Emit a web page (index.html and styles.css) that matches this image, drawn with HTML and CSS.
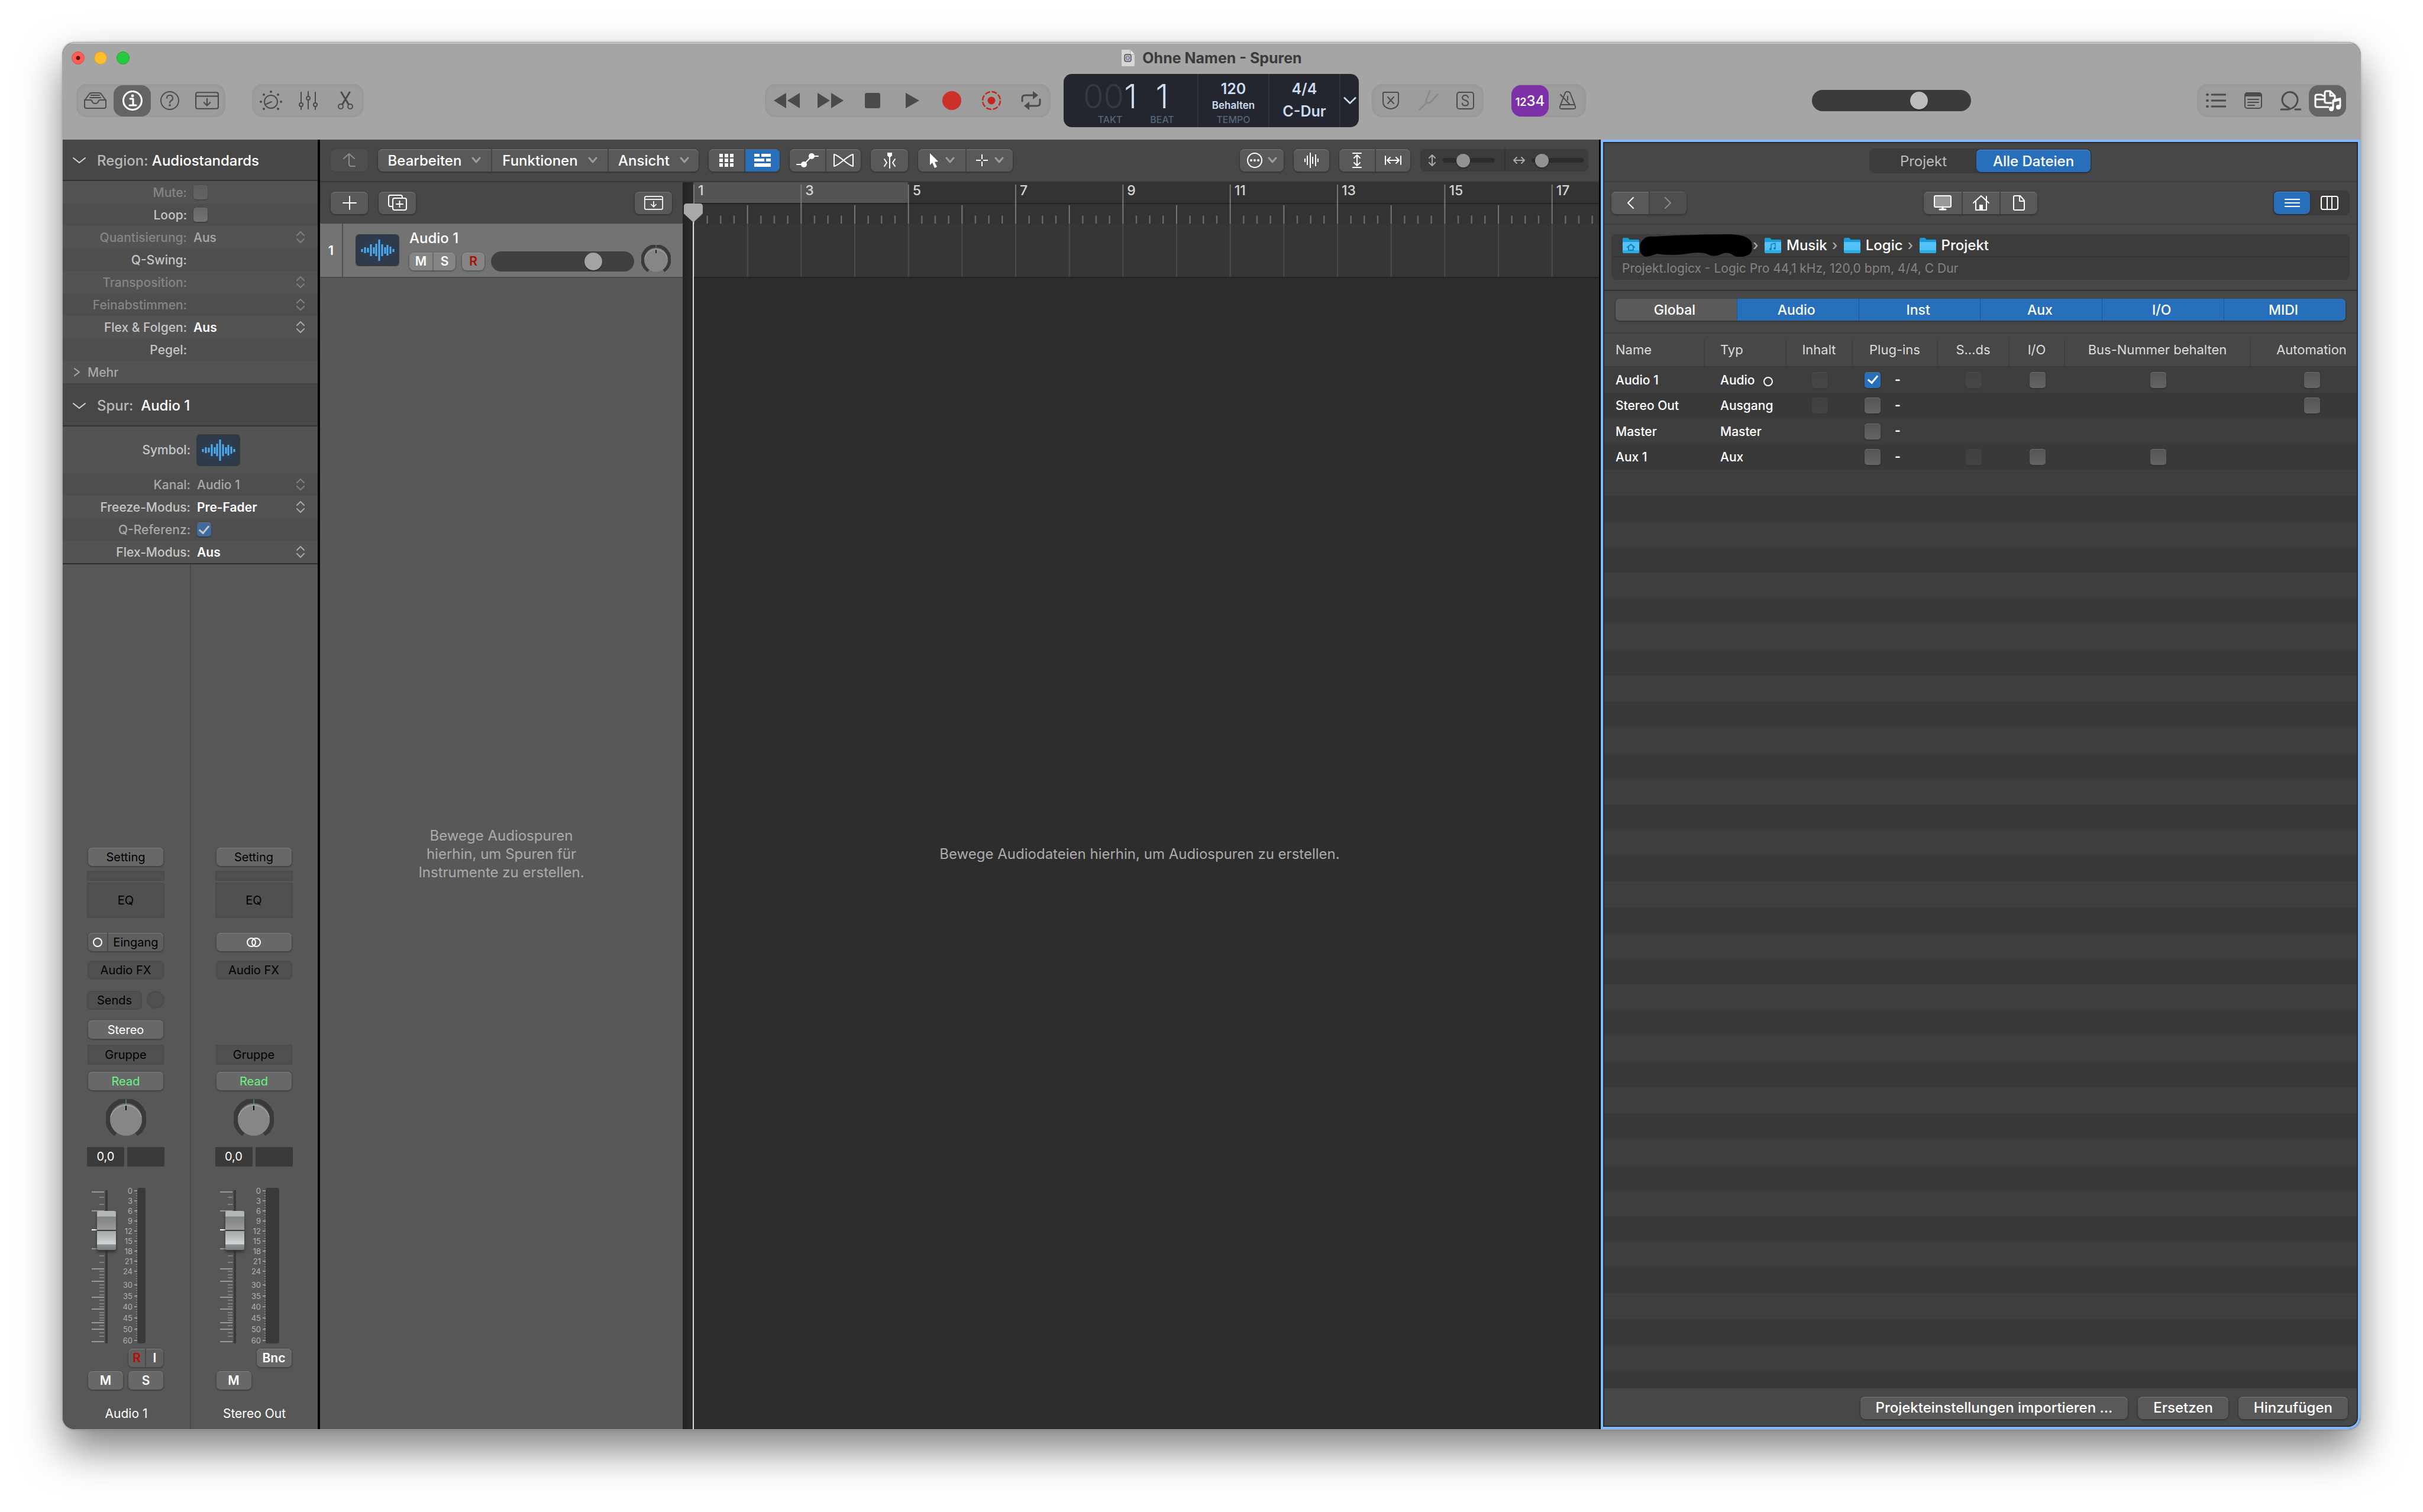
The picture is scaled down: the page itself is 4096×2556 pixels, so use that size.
FILE: index.html
```html
<!DOCTYPE html>
<html lang="de">
<head>
<meta charset="utf-8">
<title>Ohne Namen - Spuren</title>
<link rel="stylesheet" href="styles.css">
</head>
<body>
<svg class="defs" width="0" height="0" aria-hidden="true">
  <defs>
    <symbol id="i-updown" viewBox="0 0 16 24"><path d="M2 9 8 3l6 6M2 15l6 6 6-6" /></symbol>
    <symbol id="i-down" viewBox="0 0 24 14"><path d="M2 3l10 8 10-8" /></symbol>
    <symbol id="i-small" viewBox="0 0 16 12"><path d="M2 2l6 7 6-7" /></symbol>
    <symbol id="i-wave" viewBox="0 0 72 52"><path d="M10 24v5M15 21v10M20 22v8M25 16v20M30 21v11M34 15v21M39 8v36M44 16v20M49 21v11M53 17v18M58 20v12M63 24v5" /></symbol>
    <symbol id="i-circle" viewBox="0 0 18 18"><circle cx="9" cy="9" r="7" /></symbol>
    <symbol id="i-import" viewBox="0 0 38 30"><path d="M4 2h30q3 0 3 3v20q0 3-3 3H4q-3 0-3-3V5q0-3 3-3zM1 8h36M19 12v11M14 18l5 5 5-5" /></symbol>
    <symbol id="i-folder" viewBox="0 0 28 28"><path d="M0 3q0-2 2-2h7l3 3h14q2 0 2 2v18q0 3-3 3H3q-3 0-3-3z" fill="#1a9bd7" stroke="none" /><path d="M0 8h28v16q0 3-3 3H3q-3 0-3-3z" fill="#4fc3f7" stroke="none" /><path d="M0 22h28v2q0 3-3 3H3q-3 0-3-3z" fill="#2fabe4" stroke="none" /></symbol>
    <symbol id="i-knob" viewBox="0 0 68 68"><path d="M16.700 60.200A31 31 0 1 1 51.300 60.200" stroke="#3a3a3a" stroke-width="8" stroke-linecap="butt" transform="translate(0 -1)" /><path d="M34 1v8" stroke="#3fc45c" stroke-width="1" /><circle cx="34" cy="35" r="27" fill="#868686" stroke="none" /><path d="M8 30a27 27 0 0 1 52 0" stroke="#b5b5b5" stroke-width="1" /><path d="M34 12v6" stroke="#000" stroke-width="2" /></symbol>
    <symbol id="i-scale" viewBox="0 0 86 264"><path d="M8 7h21M8 39h21M8 103h21M8 137h21M8 158h21M8 185h21M8 205h21M8 228h21M8 239h21M8 260h21" stroke="#9a9a9a" stroke-width="2" /><path d="M8 71h21" stroke="#fff" stroke-width="2" /><path d="M21 16h8M21 28h8M21 115h8M21 126h8M21 141h8M21 147h8M21 152h8M21 164h8M21 169h8M21 175h8M21 181h8M21 190h8M21 196h8M21 201h8M21 211h8M21 215h8M21 220h8M21 224h8M21 233h8M21 245h8M21 251h8" stroke="#808080" stroke-width="2" /><path d="M80 5h5M80 22h5M80 39h5M80 56h5M80 73h5M80 90h5M80 107h5M80 124h5M80 141h5M80 164h5M80 183h5M80 201h5M80 220h5M80 239h5M80 258h5" stroke="#9a9a9a" stroke-width="2" /><path d="M84 5v254" stroke="#9a9a9a" stroke-width="2" stroke-dasharray="1 3" /><g fill="#b2b2b2" stroke="none" font-size="13" text-anchor="end"><text x="77" y="10">0</text><text x="77" y="27">3</text><text x="77" y="44">6</text><text x="77" y="61">9</text><text x="77" y="78">12</text><text x="77" y="95">15</text><text x="77" y="112">18</text><text x="77" y="129">21</text><text x="77" y="146">24</text><text x="77" y="169">30</text><text x="77" y="188">35</text><text x="77" y="206">40</text><text x="77" y="225">45</text><text x="77" y="244">50</text><text x="77" y="263">60</text></g></symbol>
  </defs>
</svg>

<div class="window">
  <header class="chrome">
    <div class="titlebar">
      <div class="lights"><button class="light close" aria-label="Schließen"></button><button class="light mini" aria-label="Minimieren"></button><button class="light zoom" aria-label="Zoomen"></button></div>
      <h1 class="title"><svg width="24" height="30" viewBox="0 0 24 30"><path d="M2 1h14l7 8v18q0 2-2 2H2q-1 0-1-1V2q0-1 1-1z" fill="#d6d6d6" stroke="none"/><path d="M16 1v8h7z" fill="#ececec" stroke="#aaa" stroke-width="1"/><rect x="6" y="9" width="11" height="12" rx="3" fill="#aebac6" stroke="#555" stroke-width="1.500"/><circle cx="11.500" cy="15" r="3" stroke="#667" stroke-width="1"/></svg>Ohne Namen - Spuren</h1>
    </div>
    <div class="toolbar">
      <div class="bar-side">
        <div class="pill">
          <button aria-label="Bibliothek"><svg width="40" height="32" viewBox="0 0 40 32"><path d="M2 16 9 6q2-3 5-3h12q3 0 5 3l7 10v10q0 3-3 3H5q-3 0-3-3zM2 15h10q2 0 3 3 1 3 5 3t5-3q1-3 3-3h10M13 7h14M11 11h18"/></svg></button>
          <button class="on" aria-label="Informationen"><svg width="36" height="36" viewBox="0 0 36 36"><circle cx="18" cy="18" r="15.500" stroke-width="3"/><path d="M14 15h5v11M13 26h11" stroke-width="3"/><circle cx="18" cy="10" r="2.400" fill="currentColor" stroke="none"/></svg></button>
          <button aria-label="Kurzhilfe"><svg width="36" height="36" viewBox="0 0 36 36"><circle cx="18" cy="18" r="15"/><path d="M13 14q0-5 5-5t5 5q0 3-3 4.500-2 1-2 3.500"/><circle cx="18" cy="26" r="1.800" fill="currentColor" stroke="none"/></svg></button>
          <button aria-label="Werkzeugleiste"><svg width="40" height="32"><use href="#i-import"/></svg></button>
        </div>
        <div class="pill gap-l">
          <button aria-label="Smart Controls"><svg width="40" height="36" viewBox="0 0 40 36"><circle cx="20" cy="20" r="11"/><path d="M12 24l9-4"/><g fill="currentColor" stroke="none"><circle cx="20" cy="3" r="2"/><circle cx="8" cy="8" r="2"/><circle cx="32" cy="8" r="2"/><circle cx="3" cy="20" r="2"/><circle cx="37" cy="20" r="2"/><circle cx="8" cy="32" r="2"/><circle cx="32" cy="32" r="2"/></g></svg></button>
          <button aria-label="Mixer"><svg width="32" height="34" viewBox="0 0 32 34"><path d="M4 3v18M4 28v4M16 2v8M16 17v14M28 3v18M28 28v4"/><circle cx="4" cy="24" r="3"/><circle cx="16" cy="13" r="3"/><circle cx="28" cy="24" r="3"/></svg></button>
          <button aria-label="Editoren"><svg width="28" height="34" viewBox="0 0 28 34"><path d="M7 3l12 20M21 3 9 23" stroke-width="3"/><circle cx="6" cy="27" r="4"/><circle cx="22" cy="27" r="4"/></svg></button>
        </div>
        <div class="pill push transport">
          <button aria-label="Zurückspulen"><svg width="46" height="28" viewBox="0 0 46 28"><path class="f" d="M22 1v26L1 14zM45 1v26L24 14z"/></svg></button>
          <button aria-label="Vorspulen"><svg width="46" height="28" viewBox="0 0 46 28"><path class="f" d="M1 1v26l21-13zM24 1v26l21-13z"/></svg></button>
          <button aria-label="Stopp"><svg width="28" height="28" viewBox="0 0 28 28"><rect class="f" x="1" y="1" width="26" height="26" rx="3"/></svg></button>
          <button aria-label="Wiedergabe"><svg width="28" height="28" viewBox="0 0 28 28"><path class="f" d="M3 1v26l23-13z"/></svg></button>
          <button aria-label="Aufnahme"><svg width="34" height="34" viewBox="0 0 34 34"><circle cx="17" cy="17" r="16" fill="#cc3129" stroke="none"/></svg></button>
          <button aria-label="Aufnahme erfassen"><svg width="34" height="34" viewBox="0 0 34 34"><circle cx="17" cy="17" r="15" stroke="#c9211b" stroke-width="2.500" stroke-linecap="butt" stroke-dasharray="9 2.780"/><circle cx="17" cy="17" r="6.500" fill="#c9211b" stroke="none"/></svg></button>
          <button aria-label="Cycle"><svg width="36" height="32" viewBox="0 0 36 32"><path d="M3 17v-5q0-5 5-5h14M33 14v6q0 5-5 5H14" stroke-width="3"/><path class="f" d="M21 0l9 7-9 7zM15 18l-9 7 9 7z"/></svg></button>
        </div>
      </div>
      <div class="lcd">
        <div class="lcd-pos">
          <div class="digits"><span><i>00</i>1</span><small>TAKT</small></div>
          <div class="digits"><span>1</span><small>BEAT</small></div>
        </div>
        <div class="lcd-cell"><b>120</b><strong>Behalten</strong><small>TEMPO</small></div>
        <div class="lcd-cell wide"><b>4/4</b><b>C-Dur</b></div>
        <button class="lcd-more" aria-label="Anzeigemodus"><svg width="22" height="16" viewBox="0 0 24 14"><path d="M2 2l10 10L22 2" stroke-width="3"/></svg></button>
      </div>
      <div class="bar-side">
        <div class="pill">
          <button aria-label="Ersetzen"><svg width="30" height="32" viewBox="0 0 30 32"><path d="M4 2h22q2 0 2 2v14q0 7-6 10-4 2-7 2t-7-2q-6-3-6-10V4q0-2 2-2zM10 10l10 11M20 10 10 21"/></svg></button>
          <button class="dim" aria-label="Stimmgerät"><svg width="36" height="36" viewBox="0 0 36 36"><path d="M21 2 15 17q-1 4 2 5t6-2L34 8M16 21 4 33" stroke-width="3"/></svg></button>
          <button aria-label="Solo"><svg width="32" height="32" viewBox="0 0 32 32"><rect x="2" y="2" width="28" height="28" rx="4"/><path d="M21 11q-1-4-5-4t-5 4q0 3 5 4.500t5 5q0 4-5 4t-5-4"/></svg></button>
        </div>
        <div class="pill gap-m">
          <button class="count" aria-pressed="true"><span>1</span><span>2</span><b>3</b><b>4</b></button>
          <button aria-label="Metronom"><svg width="34" height="34" viewBox="0 0 34 34"><path d="M12 6q1-4 5-4t5 4l8 21q1 4-3 4H7q-4 0-3-4zM5 24h24M5 7l16 17M17 10v6"/></svg></button>
        </div>
        <input class="range master" type="range" value="70" aria-label="Hauptlautstärke">
        <div class="pill push">
          <button aria-label="Listeneditoren"><svg width="34" height="28" viewBox="0 0 34 28"><path d="M10 4h23M10 14h23M10 24h23" stroke-width="3"/><path d="M2 4h1M2 14h1M2 24h1" stroke-width="4"/></svg></button>
          <button aria-label="Notizblock"><svg width="32" height="30" viewBox="0 0 32 30"><rect x="2" y="2" width="28" height="26" rx="4"/><path class="f" d="M2 8V5q0-3 3-3h22q3 0 3 3v3z"/><path d="M7 13h18M7 18h18M7 23h11"/></svg></button>
          <button aria-label="Loop-Browser"><svg width="36" height="34" viewBox="0 0 36 34"><path d="M2 32h12q15-3 16-16A13 13 0 1 0 13 28q2 1 3 2M26 32h9" stroke-width="3"/></svg></button>
          <button class="on" aria-label="Browser"><svg width="48" height="38" viewBox="0 0 48 38"><path d="M19 11h-3l-3-2H6q-3 0-3 3v15q0 3 3 3h19M3 17h14M19 22V6q0-3 3-3h6l8 8v6M28 3v8h7M19 20q0 3 3 3h8" stroke-width="3"/><path d="M33 32V19l12-2v12" stroke-width="3"/><path class="f" d="M33 17l13-3v5l-13 3z"/><circle class="f" cx="30" cy="33" r="4"/><circle class="f" cx="42" cy="30" r="4"/></svg></button>
        </div>
      </div>
    </div>
  </header>

  <main class="body">
    <aside class="inspector">
      <h2 class="sec"><svg width="24" height="14"><use href="#i-down"/></svg><span>Region: <b>Audiostandards</b></span></h2>
      <div class="rows">
        <div class="row off"><label for="mute">Mute:</label><input id="mute" type="checkbox" disabled></div>
        <div class="row"><label for="loop">Loop:</label><input id="loop" type="checkbox"></div>
        <div class="row off"><label for="quant">Quantisierung:</label><select id="quant"><option>Aus</option></select><svg width="16" height="24"><use href="#i-updown"/></svg></div>
        <div class="row"><label>Q-Swing:</label></div>
        <div class="row off"><label for="trans">Transposition:</label><select id="trans"><option></option></select><svg width="16" height="24"><use href="#i-updown"/></svg></div>
        <div class="row off"><label for="fein">Feinabstimmen:</label><select id="fein"><option></option></select><svg width="16" height="24"><use href="#i-updown"/></svg></div>
        <div class="row"><label for="flex">Flex &amp; Folgen:</label><select id="flex"><option>Aus</option></select><svg width="16" height="24"><use href="#i-updown"/></svg></div>
        <div class="row"><label>Pegel:</label></div>
        <div class="row more"><svg width="14" height="16" viewBox="0 0 14 16"><path d="M3 2l8 6-8 6"/></svg><span>Mehr</span></div>
      </div>
      <h2 class="sec second"><svg width="24" height="14"><use href="#i-down"/></svg><span>Spur: &nbsp;<b>Audio 1</b></span></h2>
      <div class="rows track-rows">
        <div class="row tall"><label>Symbol:</label><div class="wave"><svg width="72" height="52"><use href="#i-wave"/></svg></div></div>
        <div class="row half"><label for="kanal">Kanal:</label><select id="kanal"><option>Audio 1</option></select><svg width="16" height="24"><use href="#i-updown"/></svg></div>
        <div class="row"><label for="freeze">Freeze-Modus:</label><select id="freeze"><option>Pre-Fader</option></select><svg width="16" height="24"><use href="#i-updown"/></svg></div>
        <div class="row half"><label for="qref">Q-Referenz:</label><input class="muted" id="qref" type="checkbox" checked></div>
        <div class="row"><label for="fmod">Flex-Modus:</label><select id="fmod"><option>Aus</option></select><svg width="16" height="24"><use href="#i-updown"/></svg></div>
      </div>
      <div class="mixer">
        <section class="strip">
          <button class="key">Setting</button>
          <div class="slot slim"></div>
          <div class="slot eq">EQ</div>
          <div class="key split"><button class="lit" aria-label="Mono"><svg width="18" height="18"><use href="#i-circle"/></svg></button><button>Eingang</button></div>
          <button class="slot fx">Audio FX</button>
          <div class="sends"><button class="slot fx">Sends</button><span class="slot dot"></span></div>
          <button class="key lit">Stereo</button>
          <button class="slot group">Gruppe</button>
          <button class="key read">Read</button>
          <svg class="knob" width="68" height="68"><use href="#i-knob"/></svg>
          <div class="values"><output>0,0</output><output></output></div>
          <div class="fader"><svg width="86" height="264"><use href="#i-scale"/></svg><input type="range" value="82" aria-label="Lautstärke Audio 1"><span class="meter"></span></div>
          <div class="pair end"><div class="key split ri"><button class="rec">R</button><button>I</button></div></div>
          <div class="pair"><button class="key lit">M</button><button class="key lit">S</button></div>
          <span></span>
          <h3>Audio 1</h3>
        </section>
        <section class="strip">
          <button class="key">Setting</button>
          <div class="slot slim"></div>
          <div class="slot eq">EQ</div>
          <button class="key lit" aria-label="Stereo-Format"><svg width="26" height="18" viewBox="0 0 26 18"><circle cx="9" cy="9" r="7"/><circle cx="17" cy="9" r="7"/></svg></button>
          <button class="slot fx">Audio FX</button>
          <span></span>
          <span></span>
          <button class="slot group">Gruppe</button>
          <button class="key read">Read</button>
          <svg class="knob" width="68" height="68"><use href="#i-knob"/></svg>
          <div class="values"><output>0,0</output><output></output></div>
          <div class="fader"><svg width="86" height="264"><use href="#i-scale"/></svg><input type="range" value="82" aria-label="Lautstärke Stereo Out"><span class="meter stereo"></span></div>
          <div class="pair end"><button class="key lit">Bnc</button></div>
          <div class="pair"><button class="key lit">M</button></div>
          <span></span>
          <h3>Stereo Out</h3>
        </section>
      </div>
    </aside>

    <section class="arrange">
      <div class="menubar">
        <button class="btn w62 faint" aria-label="Hierarchie"><svg width="26" height="26" viewBox="0 0 26 26"><path d="M3 10l9-8 9 8M12 3v16q0 4 4 4h6"/></svg></button>
        <div class="seg menus"><button>Bearbeiten<svg width="16" height="12"><use href="#i-small"/></svg></button><button>Funktionen<svg width="16" height="12"><use href="#i-small"/></svg></button><button>Ansicht<svg width="16" height="12"><use href="#i-small"/></svg></button></div>
        <div class="seg w60"><button aria-label="Raster"><svg width="26" height="24" viewBox="0 0 26 24"><path class="f" d="M1 1h6v6H1zM10 1h6v6h-6zM19 1h6v6h-6zM1 9h6v6H1zM10 9h6v6h-6zM19 9h6v6h-6zM1 17h6v6H1zM10 17h6v6h-6zM19 17h6v6h-6z"/></svg></button><button class="blue" aria-label="Spuransicht"><svg width="28" height="22" viewBox="0 0 28 22"><path class="f" d="M0 0h9v5H0zM12 0h16v5H12zM0 8h17v5H0zM20 8h8v5h-8zM0 16h28v6H0z"/></svg></button></div>
        <div class="seg w60"><button aria-label="Automation"><svg width="38" height="26" viewBox="0 0 38 26"><path d="M1 20h12L26 6h11"/><circle class="f" cx="13" cy="20" r="5"/><circle class="f" cx="26" cy="6" r="5"/></svg></button><button aria-label="Flex"><svg width="36" height="24" viewBox="0 0 36 24"><path d="M2 2v20q5-1 16-10T34 2v20q-5-1-16-10T2 2z"/></svg></button></div>
        <button class="btn w62" aria-label="Catch"><svg width="26" height="28" viewBox="0 0 26 28"><path class="f" d="M9 1h8v5l-3 3h-2L9 6z"/><path d="M13 6v21M4 12l4 6-4 6M22 12l-4 6 4 6"/></svg></button>
        <div class="seg w80"><button aria-label="Zeiger"><svg width="18" height="26" viewBox="0 0 18 26"><path class="f" d="M2 1l14 14-6 1 4 8-4 2-4-9-4 4z"/></svg><svg width="16" height="12"><use href="#i-small"/></svg></button><button aria-label="Fadenkreuz"><svg width="22" height="22" viewBox="0 0 22 22"><path d="M11 1v8M11 13v8M1 11h8M13 11h8" stroke-linecap="butt"/></svg><svg width="16" height="12"><use href="#i-small"/></svg></button></div>
        <button class="btn w74 push" aria-label="Einrasten"><svg width="28" height="28" viewBox="0 0 28 28"><circle cx="14" cy="14" r="12"/><circle class="f" cx="8" cy="14" r="2"/><circle class="f" cx="14" cy="14" r="2"/><circle class="f" cx="20" cy="14" r="2"/></svg><svg width="16" height="12"><use href="#i-small"/></svg></button>
        <button class="btn w60" aria-label="Wellenform"><svg width="26" height="28" viewBox="0 0 26 28"><path d="M2 11v6M6 6v16M11 1v26M15 8v12M20 4v20M24 11v6" stroke-linecap="butt"/></svg></button>
        <div class="seg w60"><button aria-label="Vertikal zoomen"><svg width="20" height="26" viewBox="0 0 20 26"><path d="M3 1h14M3 25h14M10 4v18M5 9l5-5 5 5M5 17l5 5 5-5"/></svg></button><button aria-label="Horizontal zoomen"><svg width="28" height="18" viewBox="0 0 28 18"><path d="M1 2v14M27 2v14M4 9h20M9 4L4 9l5 5M19 4l5 5-5 5"/></svg></button></div>
        <div class="zooms"><label><svg width="16" height="22" viewBox="0 0 16 22"><path d="M8 2v18M3 7l5-5 5 5M3 15l5 5 5-5"/></svg><input class="range thin" type="range" value="36" aria-label="Vertikaler Zoom"></label><label><svg width="22" height="16" viewBox="0 0 22 16"><path d="M2 8h18M7 3L2 8l5 5M15 3l5 5-5 5"/></svg><input class="range thin" type="range" value="9" aria-label="Horizontaler Zoom"></label></div>
      </div>
      <div class="workspace">
        <div class="headers">
          <div class="head-tools"><button class="btn w62" aria-label="Spur hinzufügen"><svg width="24" height="24" viewBox="0 0 24 24"><path d="M12 1v22M1 12h22"/></svg></button><button class="btn w62" aria-label="Spur duplizieren"><svg width="32" height="28" viewBox="0 0 32 28"><path d="M7 20H4q-3 0-3-3V4q0-3 3-3h17q3 0 3 3v2M11 6h17q3 0 3 3v14q0 3-3 3H11q-3 0-3-3V9q0-3 3-3zM19.500 11v10M14 16h11"/></svg></button><button class="btn w62 push" aria-label="Import"><svg width="32" height="26"><use href="#i-import"/></svg></button></div>
          <div class="track">
            <span class="num">1</span>
            <div class="wave"><svg width="72" height="52"><use href="#i-wave"/></svg></div>
            <div class="track-main">
              <h3>Audio 1</h3>
              <div class="track-ctl"><div class="seg ms"><button>M</button><button>S</button></div><button class="btn r">R</button><input class="range vol" type="range" value="75" aria-label="Lautstärke"></div>
            </div>
            <svg class="pan" width="50" height="50"><use href="#i-knob"/></svg>
          </div>
          <p class="hint">Bewege Audiospuren<br>hierhin, um Spuren für<br>Instrumente zu erstellen.</p>
        </div>
        <div class="timeline">
          <div class="ruler">
            <svg class="ticks" viewBox="0 0 1621 72" preserveAspectRatio="none"><defs><pattern id="beats" width="96" height="72" patternUnits="userSpaceOnUse"><path d="M25 58v14M49 58v14M73 58v14" stroke="#777" stroke-width="2"/></pattern><pattern id="bars" width="192" height="72" patternUnits="userSpaceOnUse"><path d="M1 4v68M97 40v32" stroke="#7c7c7c" stroke-width="2"/></pattern></defs><path d="M0 0h384v36H0z" fill="#545454" stroke="none"/><path d="M0 37h1621" stroke="#222" stroke-width="2"/><path d="M0 0h1621v72H0z" fill="url(#beats)" stroke="none"/><path d="M0 0h1621v72H0z" fill="url(#bars)" stroke="none"/></svg>
            <ol class="numbers"><li>1</li><li>3</li><li>5</li><li>7</li><li>9</li><li>11</li><li>13</li><li>15</li><li>17</li></ol>
          </div>
          <svg class="lane" viewBox="0 0 1621 96" preserveAspectRatio="none"><defs><pattern id="grid" width="96" height="96" patternUnits="userSpaceOnUse"><path d="M1 0v96" stroke="#4c4c4c" stroke-width="2"/></pattern></defs><path d="M0 0h1621v96H0z" fill="url(#grid)" stroke="none"/></svg>
          <p class="hint drop">Bewege Audiodateien hierhin, um Audiospuren zu erstellen.</p>
          <div class="playhead"><svg width="32" height="32" viewBox="0 0 32 32"><path d="M0 5q0-5 5-5h22q5 0 5 5v12L16 32 0 17z" fill="#a9a9a9" stroke="none"/></svg></div>
        </div>
      </div>
    </section>

    <section class="browser">
      <div class="tabs-row"><div class="toggle"><button>Projekt</button><button class="blue">Alle Dateien</button></div></div>
      <div class="nav-row">
        <div class="seg nav"><button aria-label="Zurück"><svg width="14" height="24" viewBox="0 0 14 24"><path d="M12 3l-9 9 9 9"/></svg></button><button class="faint" aria-label="Vor"><svg width="14" height="24" viewBox="0 0 14 24"><path d="M2 3l9 9-9 9"/></svg></button></div>
        <div class="seg places"><button aria-label="Computer"><svg width="30" height="26" viewBox="0 0 30 26"><rect x="1" y="1" width="28" height="19" rx="2" fill="#999"/><path d="M15 20v4M10 24h10" stroke-width="3"/></svg></button><button aria-label="Benutzerordner"><svg width="30" height="28" viewBox="0 0 30 28"><path d="M2 14L15 2l13 12M6 12v14h18V12M24 9V3"/><path class="f" d="M12 17h6v9h-6z"/></svg></button><button aria-label="Projektordner"><svg width="22" height="28" viewBox="0 0 22 28"><path d="M4 2h9l7 8v14q0 2-2 2H4q-2 0-2-2V4q0-2 2-2zM12 2v9h8"/></svg></button></div>
        <div class="toggle views"><button class="blue" aria-label="Liste"><svg width="26" height="18" viewBox="0 0 26 18"><path d="M0 3h26M0 9h26M0 15h26"/></svg></button><button aria-label="Spalten"><svg width="30" height="24" viewBox="0 0 30 24"><rect x="1" y="1" width="28" height="22" rx="3"/><path d="M11 1v22M19 1v22"/></svg></button></div>
      </div>
      <div class="path-row">
        <div class="path">
          <nav><svg width="28" height="28"><use href="#i-folder"/><path d="M8 17l6-5 6 5M10 16v6h8v-6" stroke="#1780b8" stroke-width="2"/></svg><svg class="blob" width="192" height="38" viewBox="0 0 192 38"><path d="M8 8Q12 3 24 4L60 2q60-2 90-2 34 0 40 14 4 18-8 22-14 5-22 0-10-7-20-3-14 7-26 0-12-4-34 0-24 4-50 0-10 4-18 5Q2 36 1 26 0 14 8 8z" fill="#000" stroke="none"/></svg><i>›</i><svg width="28" height="28"><use href="#i-folder"/><path d="M11 19v-7l7-2v8" stroke="#1780b8" stroke-width="1.500"/><circle cx="10" cy="20" r="2" fill="#1780b8" stroke="none"/><circle cx="17" cy="19" r="2" fill="#1780b8" stroke="none"/></svg><a href="#">Musik</a><i>›</i><svg width="28" height="28"><use href="#i-folder"/></svg><a href="#">Logic</a><i>›</i><svg width="28" height="28"><use href="#i-folder"/></svg><a href="#">Projekt</a></nav>
          <p>Projekt.logicx - Logic Pro 44,1 kHz, 120,0 bpm, 4/4, C Dur</p>
        </div>
      </div>
      <div class="filter-row"><div class="filters"><button>Global</button><button class="blue">Audio</button><button class="blue">Inst</button><button class="blue">Aux</button><button class="blue">I/O</button><button class="blue">MIDI</button></div></div>
      <div class="list">
        <table>
          <colgroup><col class="c1"><col class="c2"><col class="c3"><col class="c4"><col class="c5"><col class="c6"><col class="c7"><col></colgroup>
          <thead><tr><th>Name</th><th>Typ</th><th>Inhalt</th><th>Plug-ins</th><th>S...ds</th><th>I/O</th><th>Bus-Nummer behalten</th><th>Automation</th></tr></thead>
          <tbody>
            <tr><td>Audio 1</td><td>Audio <svg width="18" height="18"><use href="#i-circle"/></svg></td><td><input type="checkbox" disabled aria-label="Inhalt"></td><td><input type="checkbox" checked aria-label="Plug-ins"><b>-</b></td><td><input type="checkbox" disabled aria-label="Sends"></td><td><input type="checkbox" aria-label="I/O"></td><td><input type="checkbox" aria-label="Bus-Nummer"></td><td><input type="checkbox" aria-label="Automation"></td></tr>
            <tr><td>Stereo Out</td><td>Ausgang</td><td><input type="checkbox" disabled aria-label="Inhalt"></td><td><input type="checkbox" aria-label="Plug-ins"><b>-</b></td><td></td><td></td><td></td><td><input type="checkbox" aria-label="Automation"></td></tr>
            <tr><td>Master</td><td>Master</td><td></td><td><input type="checkbox" aria-label="Plug-ins"><b>-</b></td><td></td><td></td><td></td><td></td></tr>
            <tr><td>Aux 1</td><td>Aux</td><td></td><td><input type="checkbox" aria-label="Plug-ins"><b>-</b></td><td><input type="checkbox" disabled aria-label="Sends"></td><td><input type="checkbox" aria-label="I/O"></td><td><input type="checkbox" aria-label="Bus-Nummer"></td><td></td></tr>
          </tbody>
        </table>
      </div>
      <footer><button class="btn">Projekteinstellungen importieren ...</button><button class="btn">Ersetzen</button><button class="btn">Hinzufügen</button></footer>
    </section>
  </main>
</div>
</body>
</html>
```
FILE: styles.css
```css
* { box-sizing: border-box; }
body {
  margin: 0;
  min-height: 100vh;
  padding: 72px 106px 140px;
  display: flex;
  background: #fff;
  font-family: "Inter", "Liberation Sans", sans-serif;
  font-size: 21px;
  color: #fff;
}
h1, h2, h3, p, ol { margin: 0; padding: 0; font-weight: 500; }
button, select, input { font: inherit; color: inherit; margin: 0; padding: 0; border: 0; background: none; }
button { display: flex; align-items: center; justify-content: center; white-space: nowrap; }
svg { flex: none; display: block; fill: none; stroke: currentColor; stroke-width: 2; stroke-linecap: round; stroke-linejoin: round; }
.f { fill: currentColor; stroke: none; }
.defs { position: absolute; }
.push { margin-left: auto; }
.blue { background: #276fbb !important; color: #fff; }

.window {
  flex: 1;
  min-width: 0;
  display: flex;
  flex-direction: column;
  border-radius: 20px;
  overflow: hidden;
  background: #474747;
  box-shadow: 0 0 0 1px #a8a8a8, 0 0 4px rgba(0, 0, 0, .3), 0 34px 70px rgba(0, 0, 0, .5);
}

/* title bar and control bar */
.chrome { background: #a5a5a5; color: #4b4b4b; border-top: 2px solid #c6c6c6; height: 164px; }
.titlebar { display: grid; grid-template-columns: 1fr auto 1fr; align-items: center; height: 48px; margin-bottom: 3px; }
.lights { display: flex; gap: 16px; padding-left: 15px; }
.light { width: 22px; height: 22px; border-radius: 50%; }
.close { background: radial-gradient(circle, #6a0b06 0 3px, #fe5f57 4px); border: 1px solid #e0443e; }
.mini { background: #febc2e; border: 1px solid #dea123; }
.zoom { background: #28c840; border: 1px solid #1aab29; }
.title { display: flex; align-items: center; gap: 12px; font-size: 25px; font-weight: 700; color: #3b3b3b; }
.toolbar { display: grid; grid-template-columns: minmax(0, 1fr) auto minmax(0, 1fr); gap: 22px; padding: 0 24px 0 23px; height: 90px; }
.bar-side { display: flex; align-items: center; }
.pill { display: flex; height: 56px; border-radius: 18px; background: #9d9d9d; box-shadow: inset 0 0 6px rgba(0, 0, 0, .07); align-items: center; }
.pill button { width: 63px; height: 53px; border-radius: 16px; }
.pill .on { background: #646464; color: #fff; }
.pill .dim { color: #8a8a8a; }
.transport button { width: 67px; }
.transport button:nth-child(-n+2) { width: 74px; }
.gap-l { margin-left: 45px; }
.gap-m { margin-left: 47px; }
.pill .count { background: #7d31a6; color: #fff; align-items: baseline; padding-top: 12px; font-weight: 600; font-size: 18px; }
.count b { font-size: 24px; font-weight: 500; }
.lcd { display: flex; width: 499px; height: 90px; border-radius: 14px; background: #23262e; color: #cbdcf1; }
.lcd small { font-size: 16px; color: #54657a; font-weight: 500; }
.lcd-pos { display: flex; width: 226px; padding-left: 33px; gap: 22px; }
.digits { display: flex; flex-direction: column; align-items: center; }
.digits span { font-size: 56px; font-weight: 300; line-height: 68px; height: 67px; padding-top: 4px; }
.digits i { font-style: normal; color: #353941; }
.lcd-cell { width: 120px; border-left: 2px solid #2e323a; display: flex; flex-direction: column; align-items: center; padding-top: 10px; }
.lcd-cell b { font-size: 25px; line-height: 30px; font-weight: 600; }
.lcd-cell strong { font-size: 17px; line-height: 26px; font-weight: 600; }
.lcd-cell small { line-height: 22px; }
.lcd-cell.wide { gap: 8px; }
.lcd-more { flex: 1; border-left: 2px solid #2e323a; }

/* sliders */
.range { appearance: none; border-radius: 18px; background: #3b3b3b; }
.range::-webkit-slider-thumb { appearance: none; width: 30px; height: 30px; border-radius: 50%; background: #bdbdbd; box-shadow: 0 1px 2px #222; }
.master { width: 269px; height: 36px; padding: 0 3px; margin-left: auto; }
.vol { width: 242px; height: 34px; padding: 0 2px; background: #404040; }
.vol::-webkit-slider-thumb { background: #a3a3a3; }
.thin { width: 88px; height: 8px; background: #2c2c2c; }
.thin::-webkit-slider-thumb { width: 23px; height: 23px; background: #929292; }

/* tick boxes */
input[type="checkbox"] { appearance: none; width: 24px; height: 24px; border-radius: 5px; background: linear-gradient(#555, #646464); box-shadow: inset 0 1px #6e6e6e, 0 1px 2px #2c2c2c; flex: none; }
input[type="checkbox"]:disabled { opacity: .55; }
input[type="checkbox"]:checked { background: #276fbb; }
input[type="checkbox"]:checked::before { content: ""; display: block; width: 7px; height: 14px; margin: 2px auto 0; border: solid #fff; border-width: 0 3px 3px 0; rotate: 40deg; }
input.muted:checked { background: #3f6c9f; }
input.muted:checked::before { border-color: #c8c8c8; }

.body { flex: 1; display: flex; min-height: 0; }

/* inspector */
.inspector { width: 435px; border-right: 4px solid #000; display: flex; flex-direction: column; }
.sec { display: flex; align-items: center; gap: 18px; height: 70px; padding: 2px 0 0 16px; border-bottom: 2px solid #333; color: #b8b8b8; font-size: 24px; }
.sec svg { color: #d5d5d5; }
.sec b { color: #fff; font-weight: 500; }
.second { height: 73px; border-top: 2px solid #424242; }
.row { display: flex; align-items: center; gap: 11px; height: 38px; padding-right: 21px; background: #535353; color: #c6c6c6; font-weight: 500; }
.row:nth-child(even) { background: #4e4e4e; }
.row label { width: 210px; text-align: right; }
.row select { appearance: none; flex: 1; color: #fff; font-weight: 600; }
.row svg { color: #aaa; }
.row > input { background: linear-gradient(#666, #747474); }
.off { color: #858585; }
.off select { color: #a9a9a9; font-weight: 500; }
.off > svg { color: #808080; }
.half { color: #a9a9a9; }
.half select { color: #a9a9a9; font-weight: 500; }
.half > svg { color: #808080; }
.more { padding-left: 17px; color: #a9a9a9; }
.track-rows label { width: 216px; }
.tall { height: 79px; }
.wave { width: 72px; height: 52px; border-radius: 5px; background: radial-gradient(#2c3f57, #2e3844); box-shadow: 0 0 0 1px #3a3a3a; }
.wave svg { color: #4fadf3; stroke-width: 3; stroke-linecap: butt; }

/* channel strips */
.mixer { flex: 1; display: flex; background: #575757; border-top: 2px solid #2e2e2e; }
.strip { flex: 1; display: grid; align-content: end; align-items: start; grid-template-columns: 131px; grid-template-rows: 39px 20px 85px 47px 51px 50px 41px 46px 46px 81px 69px 272px 38px 34px 12px 52px; padding-left: 41px; font-size: 20px; }
.strip + .strip { border-left: 2px solid #484848; }
.strip h3 { font-size: 21px; text-align: center; line-height: 52px; font-weight: 400; padding-left: 2px; }
.key { height: 31px; width: 127px; justify-self: center; border-radius: 7px; background: #686868; color: #000; box-shadow: inset 0 1px #808080, 0 1px 2px 1px #434343; }
.lit { color: #fff; }
.read { color: #6bf582; }
.split { display: flex; background: #5f5f5f; }
.split button { flex: 1; }
.split button:first-child { flex: none; width: 34px; border-right: 2px solid #4b4b4b; }
.slot { width: 129px; justify-self: center; border-radius: 2px; background: #505050; box-shadow: inset 0 0 4px rgba(0, 0, 0, .14); color: #000; display: flex; align-items: center; justify-content: center; }
.slim { height: 17px; width: 131px; }
.eq { height: 60px; width: 131px; }
.fx { height: 32px; border-radius: 7px; }
.group { height: 34px; }
.sends { display: flex; gap: 8px; }
.sends .fx { width: 93px; }
.dot { width: 30px; height: 30px; border-radius: 50%; }
.knob { justify-self: center; }
.values { display: flex; gap: 5px; }
.values output { flex: 1; height: 33px; background: #3a3a3a; border-radius: 2px; text-align: center; line-height: 33px; }
.fader { display: grid; grid-template-columns: 17px 32px 36px auto; }
.fader svg { grid-area: 1 / 1 / 2 / 5; stroke-linecap: butt; }
.fader input { grid-area: 1 / 2; appearance: none; writing-mode: vertical-lr; direction: rtl; width: 32px; height: 259px; margin-top: 4px; background: linear-gradient(90deg, transparent 14px, #3a3a3a 14px 18px, transparent 18px); }
.fader input::-webkit-slider-thumb { appearance: none; width: 32px; height: 66px; border-radius: 3px; background: linear-gradient(#b4b6b6 0 9px, #7d8282 10px, #9c9c9c 32px, #3c3c3c 32px 34px, #a3a6a6 34px, #cfd6d8 56px, #8d9090 57px, #7c7f7f); box-shadow: 0 4px 5px #333; }
.meter { grid-area: 1 / 4; width: 14px; height: 263px; background: #3a3a3a; border-radius: 3px; }
.meter.stereo { width: 23px; }
.pair { display: flex; justify-content: space-between; padding: 0 2px; }
.pair.end { justify-content: flex-end; }
.pair .key { width: 59px; font-weight: 600; color: #fff; font-size: 21px; }
.pair .split button:first-child { width: 30px; }
.pair .rec { color: #b80c05; }

/* arrange area */
.arrange { flex: 1; min-width: 0; display: flex; flex-direction: column; border-right: 3px solid #000; }
.menubar { display: flex; align-items: center; gap: 17px; height: 72px; padding: 0 18px; border-bottom: 2px solid #3a3a3a; }
.btn, .seg { height: 38px; border-radius: 8px; background: #595959; box-shadow: inset 0 2px #686868, 0 1px 2px 1px #363636; }
.seg { display: flex; overflow: hidden; }
.seg button { height: 38px; box-shadow: inset 0 1px #686868; }
.seg button + button { border-left: 2px solid #444; }
.w62 { width: 63px; }
.w60 button, .btn.w60 { width: 60px; }
.w74 { width: 74px; gap: 8px; }
.w80 button { width: 80px; gap: 10px; }
.faint { background: #4e4e4e; color: #8c8c8c; box-shadow: 0 0 0 1px #424242; }
.menus { font-size: 24px; font-weight: 500; }
.menus button { gap: 17px; width: 197px; }
.menus button:first-child { width: 191px; }
.menus button:last-child { width: 154px; }
.menus svg, .w80 svg + svg, .w74 svg + svg { color: #9c9c9c; stroke-width: 3; }
.zooms { display: flex; height: 38px; border-radius: 8px; background: #3c3c3c; color: #aaa; }
.zooms label { width: 142px; display: flex; align-items: center; gap: 10px; padding-left: 12px; }
.zooms label + label { border-left: 2px solid #333; }
.workspace { flex: 1; display: flex; min-height: 0; }
.headers { width: 613px; background: #585858; display: flex; flex-direction: column; }
.head-tools { display: flex; align-items: center; gap: 18px; height: 70px; padding: 0 18px; background: #474747; }
.track { display: flex; align-items: center; height: 92px; background: #737373; border-bottom: 2px solid #4a4a4a; font-weight: 600; }
.num { width: 39px; height: 100%; display: grid; place-items: center; border-right: 2px solid #4e4e4e; font-size: 22px; margin-right: 22px; }
.track-main { margin-left: 18px; flex: none; }
.track-main h3 { font-size: 24px; line-height: 30px; }
.track-ctl { display: flex; align-items: center; margin-top: 7px; }
.ms, .ms button { height: 30px; background: #858585; }
.ms button { width: 39px; box-shadow: inset 0 1px #959595; }
.btn.r { width: 38px; height: 30px; margin: 0 11px; background: #858585; color: #b00c05; box-shadow: inset 0 1px #959595, 0 1px 2px 1px #555; }
.ms { box-shadow: 0 1px 2px 1px #555; }
.ms button + button { border-color: #6b6b6b; }
.pan { margin: 32px 0 0 12px; }
.hint { margin: auto; font-size: 24px; line-height: 31px; text-align: center; color: #ababab; font-weight: 400; }
.timeline { flex: 1; min-width: 0; display: flex; flex-direction: column; position: relative; padding-left: 18px; background: linear-gradient(90deg, #232323, #2b2b2b 18px, #2d2d2d 18px); }
.ruler { display: grid; height: 70px; background: #333; }
.ruler > * { grid-area: 1 / 1; }
.ticks { width: 100%; height: 70px; stroke-linecap: butt; }
.numbers { list-style: none; display: grid; grid-template-columns: repeat(8, minmax(0, 192fr)) minmax(0, 85fr); font-size: 23px; line-height: 28px; color: #d4d4d4; }
.numbers li { padding-left: 8px; }
.lane { width: 100%; height: 92px; background: #363636; border-bottom: 2px solid #242424; }
.drop { padding-right: 22px; }
.playhead { position: absolute; top: 36px; bottom: 0; left: 2px; width: 32px; background: linear-gradient(90deg, transparent 15px, #ddd 15px 17px, transparent 17px); }

/* file browser */
.browser { width: 1284px; display: flex; flex-direction: column; border: 4px solid #7fb9fc; border-bottom-right-radius: 20px; box-shadow: inset 0 0 0 2px #2b2b2b; padding: 2px; }
.tabs-row { height: 66px; display: flex; align-items: center; justify-content: center; padding-bottom: 4px; border-bottom: 2px solid #404040; }
.toggle { display: flex; align-items: center; height: 42px; padding: 0 2px; border-radius: 9px; background: #3c3c3c; font-size: 24px; color: #bdbdbd; }
.toggle button { width: 179px; height: 38px; border-radius: 8px; }
.toggle .blue { width: 193px; font-weight: 500; box-shadow: inset 0 1px #4f8dcc, 0 1px 2px #222; }
.nav-row { display: grid; grid-template-columns: 1fr auto 1fr; align-items: center; height: 72px; padding: 0 12px; border-bottom: 2px solid #404040; }
.nav { width: 127px; }
.nav button, .places button { width: 64px; }
.views { justify-self: end; }
.views button { width: 65px; color: #fff; }
.views .blue { width: 61px; }
.path-row { padding: 16px 12px 17px; border-bottom: 2px solid #333; }
.path { border-radius: 9px; background: #3c3c3c; }
.path nav { display: flex; align-items: center; height: 39px; padding-left: 19px; border-bottom: 2px solid #363636; font-size: 24px; font-weight: 500; }
.path a { color: #fff; text-decoration: none; margin: 0 8px 0 9px; }
.path i { font-style: normal; color: #aaa; margin-right: 13px; width: 7px; }
.path p { color: #848484; font-size: 21px; line-height: 38px; padding-left: 18px; font-weight: 400; }
.filter-row { padding: 13px 19px 20px; border-bottom: 2px solid #404040; }
.filters { display: flex; height: 37px; border-radius: 7px; overflow: hidden; background: #5a5a5a; font-size: 23px; font-weight: 500; box-shadow: 0 1px 2px 1px #363636; }
.filters button { flex: 1; padding-right: 5px; }
.filters button + button { border-left: 1px solid #1e5795; }
.list { flex: 1; background: repeating-linear-gradient(#3e3e3e 0 44px, #393939 44px 87px) 0 56px no-repeat #474747; overflow: hidden; }
table { width: 100%; border-collapse: collapse; table-layout: fixed; }
.c1 { width: 170px; } .c2 { width: 138px; } .c3 { width: 112px; } .c4 { width: 144px; } .c5 { width: 121px; } .c6 { width: 94px; } .c7 { width: 314px; }
th { height: 56px; padding: 0 2px 2px 0; font-size: 22px; font-weight: 400; color: #dcdcdc; border-bottom: 2px solid #3a3a3a; background: linear-gradient(#3e3e3e, #3e3e3e) 100% 100% / 2px 45px no-repeat #474747; white-space: nowrap; }
th:first-child, td:first-child { text-align: left; padding-left: 19px; }
th:nth-child(2), td:nth-child(2) { text-align: left; padding-left: 26px; }
th:last-child, td:last-child { padding-left: 28px; }
th:last-child { background: #474747; }
td { height: 43px; padding: 0; text-align: center; font-weight: 500; white-space: nowrap; }
tr:nth-child(odd) td { height: 44px; }
td input[type="checkbox"] { width: 27px; height: 27px; vertical-align: middle; }
td input[type="checkbox"]:disabled { opacity: .25; }
td svg { display: inline-block; vertical-align: -4px; margin-left: 8px; }
td:nth-child(4) { text-align: left; padding-left: 20px; }
td b { margin-left: 24px; }
footer { display: flex; align-items: center; justify-content: flex-end; gap: 17px; height: 63px; padding: 2px 15px 0 0; font-size: 24px; font-weight: 500; }
footer .btn { padding: 0 26px; }
```
